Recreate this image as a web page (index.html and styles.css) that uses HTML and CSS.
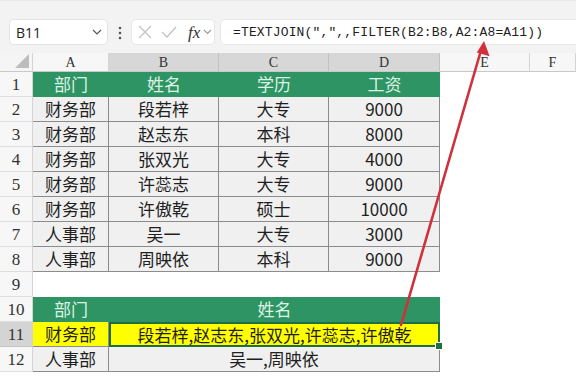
FILE: index.html
```html
<!DOCTYPE html>
<html lang="zh-CN">
<head>
<meta charset="utf-8">
<title>TEXTJOIN FILTER</title>
<link rel="stylesheet" href="styles.css">
</head>
<body>
<div class="app">
  <div class="toolbar">
    <div class="namebox">
      <span class="ref">B11</span>
      <svg class="chev" width="10" height="6" viewBox="0 0 10 6"><path d="M1 1 L5 5 L9 1" fill="none" stroke="#555" stroke-width="1.2"/></svg>
    </div>
    <svg class="dots" width="6" height="14" viewBox="0 0 6 14"><circle cx="3" cy="2" r="1.3" fill="#555"/><circle cx="3" cy="7" r="1.3" fill="#555"/><circle cx="3" cy="12" r="1.3" fill="#555"/></svg>
    <div class="fxbox">
      <svg width="14" height="14" viewBox="0 0 14 14"><path d="M1 1 L13 13 M13 1 L1 13" stroke="#c2c2c2" stroke-width="1.3" fill="none"/></svg>
      <svg width="16" height="14" viewBox="0 0 16 14"><path d="M1 7 L6 12 L15 2" stroke="#c2c2c2" stroke-width="1.3" fill="none"/></svg>
      <span class="fx">fx</span>
      <svg class="chev-s" width="9" height="6" viewBox="0 0 9 6"><path d="M1 1 L4.5 4.5 L8 1" fill="none" stroke="#9a9a9a" stroke-width="1.1"/></svg>
    </div>
    <div class="formula">=TEXTJOIN(",",,FILTER(B2:B8,A2:A8=A11))</div>
  </div>

  <div class="sheet">
    <div class="corner"><svg width="14" height="14" viewBox="0 0 14 14"><path d="M14 0 L14 14 L0 14 Z" fill="#bdbdbd"/></svg></div>
    <div class="ch">A</div><div class="ch sel">B</div><div class="ch sel">C</div><div class="ch sel">D</div><div class="ch">E</div><div class="ch">F</div>

    <div class="rh">1</div><div class="c g">部门</div><div class="c g">姓名</div><div class="c g">学历</div><div class="c g">工资</div><div class="e"></div><div class="e"></div>
    <div class="rh">2</div><div class="c d">财务部</div><div class="c d">段若梓</div><div class="c d">大专</div><div class="c d">9000</div><div class="e"></div><div class="e"></div>
    <div class="rh">3</div><div class="c d">财务部</div><div class="c d">赵志东</div><div class="c d">本科</div><div class="c d">8000</div><div class="e"></div><div class="e"></div>
    <div class="rh">4</div><div class="c d">财务部</div><div class="c d">张双光</div><div class="c d">大专</div><div class="c d">4000</div><div class="e"></div><div class="e"></div>
    <div class="rh">5</div><div class="c d">财务部</div><div class="c d">许蕊志</div><div class="c d">大专</div><div class="c d">9000</div><div class="e"></div><div class="e"></div>
    <div class="rh">6</div><div class="c d">财务部</div><div class="c d">许傲乾</div><div class="c d">硕士</div><div class="c d">10000</div><div class="e"></div><div class="e"></div>
    <div class="rh">7</div><div class="c d">人事部</div><div class="c d">吴一</div><div class="c d">大专</div><div class="c d">3000</div><div class="e"></div><div class="e"></div>
    <div class="rh">8</div><div class="c d">人事部</div><div class="c d">周映依</div><div class="c d">本科</div><div class="c d">9000</div><div class="e"></div><div class="e"></div>
    <div class="rh">9</div><div class="e"></div><div class="e"></div><div class="e"></div><div class="e"></div><div class="e"></div><div class="e"></div>
    <div class="rh">10</div><div class="c g">部门</div><div class="c g span3">姓名</div><div class="e"></div><div class="e"></div>
    <div class="rh sel">11</div><div class="c y">财务部</div><div class="c y span3 active">段若梓,赵志东,张双光,许蕊志,许傲乾</div><div class="e"></div><div class="e"></div>
    <div class="rh">12</div><div class="c d">人事部</div><div class="c d span3">吴一,周映依</div><div class="e"></div><div class="e"></div>
  </div>

  <svg class="arrow" width="576" height="376" viewBox="0 0 576 376">
    <line x1="401" y1="325" x2="480.5" y2="52" stroke="#d0313b" stroke-width="2.6" stroke-linecap="round"/>
    <polygon points="484,41 489.6,56.2 476.8,52.5" fill="#d0313b"/>
  </svg>
</div>
</body>
</html>
```

FILE: styles.css
```css
* { box-sizing: border-box; }
html, body { margin: 0; padding: 0; background: #ffffff; }
body { width: 576px; height: 376px; overflow: hidden; }

.app { position: relative; width: 576px; height: 376px; overflow: hidden; }

.toolbar {
  height: 53px;
  background: #f3f3f3;
  border-top: 1px solid #e9e9e9;
  display: flex;
  align-items: flex-start;
  padding: 18px 0 0 9px;
}

.namebox {
  width: 99px;
  height: 26px;
  background: #fff;
  border: 1px solid #e4e4e4;
  border-radius: 5px;
  display: flex;
  align-items: center;
  justify-content: space-between;
  padding: 0 5px 0 6px;
}
.ref { font-family: "Open Sans", "Liberation Sans", sans-serif; font-size: 14px; color: #222; }

.dots { margin: 7px 8px 0 9px; }

.fxbox {
  width: 84px;
  height: 26px;
  background: #fff;
  border: 1px solid #e8e8e8;
  border-radius: 5px;
  display: flex;
  align-items: center;
  gap: 9px;
  padding: 0 0 0 6px;
}
.fx {
  font-family: "Liberation Serif", serif;
  font-style: italic;
  font-size: 17px;
  color: #333;
  margin-left: 2px;
  line-height: 1;
}
.chev-s { margin-left: -6px; }

.formula {
  flex: 1;
  margin-left: 5px;
  height: 26px;
  background: #fff;
  border: 1px solid #e8e8e8;
  border-right: none;
  border-radius: 5px 0 0 5px;
  padding-left: 12px;
  font-family: "Liberation Mono", monospace;
  font-size: 13px;
  letter-spacing: 0.15px;
  line-height: 25px;
  color: #1e1e1e;
  white-space: nowrap;
}

.sheet {
  display: grid;
  grid-template-columns: 33px 76px 110px 110px 111px 90px 46px;
  grid-template-rows: 19px repeat(12, 25px);
}

.corner {
  background: #f5f5f5;
  border-right: 1px solid #d4d4d4;
  border-bottom: 1px solid #c9c9c9;
  display: flex;
  align-items: flex-end;
  justify-content: flex-end;
  padding: 0 3px 3px 0;
}

.ch {
  background: #f7f7f7;
  border-right: 1px solid #d4d4d4;
  border-bottom: 1px solid #c9c9c9;
  font-family: "Liberation Serif", serif;
  font-size: 14px;
  line-height: 19px;
  text-align: center;
  color: #333;
}
.ch.sel { background: #d7d7d7; border-right-color: #c2c2c2; }

.rh {
  background: #f7f7f7;
  border-right: 1px solid #d4d4d4;
  border-bottom: 1px solid #dedede;
  font-family: "Liberation Serif", serif;
  font-size: 17px;
  line-height: 25px;
  text-align: center;
  color: #333;
}
.rh.sel { background: #d4d4d4; border-bottom-color: #c4c4c4; }

.c {
  font-family: "Noto Sans CJK SC", "Noto Sans", sans-serif;
  font-size: 17px;
  line-height: 24px;
  text-align: center;
  white-space: nowrap;
  color: #1f1f1f;
}
.g {
  background: #2f9463;
  color: #dcf2e4;
}
.d {
  background: #f0f0f0;
  border-right: 1px solid #8c8c8c;
  border-bottom: 1px solid #8c8c8c;
}
.y {
  background: #ffff00;
  border-right: 1px solid #8c8c8c;
  border-bottom: 1px solid #8c8c8c;
}
.span3 { grid-column: span 3; }
.e { background: #fff; }

.active {
  position: relative;
  border: 2px solid #1f6e43;
  line-height: 21px;
}
.active::after {
  content: "";
  position: absolute;
  right: -5px;
  bottom: -5px;
  width: 6px;
  height: 6px;
  background: #1f6e43;
  border: 1px solid #fff;
}

.arrow { position: absolute; left: 0; top: 0; pointer-events: none; }
```
